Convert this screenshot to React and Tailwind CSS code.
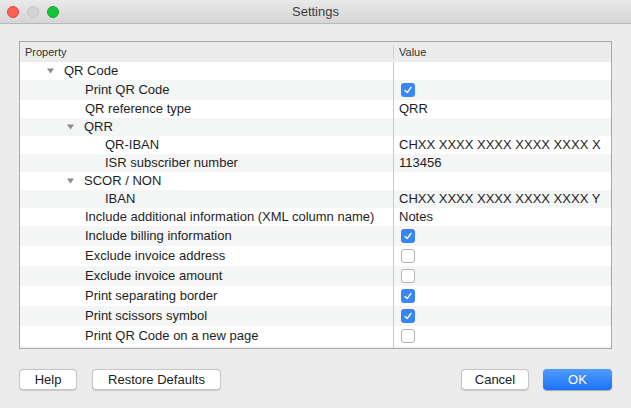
const rows = [
  { level: 0, label: "QR Code", toggle: true },
  { level: 1, label: "Print QR Code", check: true },
  { level: 1, label: "QR reference type", value: "QRR" },
  { level: 1, label: "QRR", toggle: true },
  { level: 2, label: "QR-IBAN", value: "CHXX XXXX XXXX XXXX XXXX X" },
  { level: 2, label: "ISR subscriber number", value: "113456" },
  { level: 1, label: "SCOR / NON", toggle: true },
  { level: 2, label: "IBAN", value: "CHXX XXXX XXXX XXXX XXXX Y" },
  { level: 1, label: "Include additional information (XML column name)", value: "Notes" },
  { level: 1, label: "Include billing information", check: true },
  { level: 1, label: "Exclude invoice address", check: false },
  { level: 1, label: "Exclude invoice amount", check: false },
  { level: 1, label: "Print separating border", check: true },
  { level: 1, label: "Print scissors symbol", check: true },
  { level: 1, label: "Print QR Code on a new page", check: false },
];

const indents = ["pl-[44px]", "pl-[65px]", "pl-[85px]"];
const toggleIndents = ["pl-[27px]", "pl-[47px]", "pl-[67px]"];

const Triangle = () => (
  <svg width="7" height="6" viewBox="0 0 7 6" className="mr-[10px] shrink-0">
    <path d="M0 0.5 L7 0.5 L3.5 5.5 Z" fill="#8c8c8c" />
  </svg>
);

const Checkbox = ({ checked }) =>
  checked ? (
    <span className="flex h-[14px] w-[14px] items-center justify-center rounded-[3px] bg-[#3b86f7]">
      <svg width="10" height="10" viewBox="0 0 10 10">
        <path d="M2 5.4 L4.2 7.6 L8 2.4" fill="none" stroke="white" strokeWidth="1.4" strokeLinecap="round" strokeLinejoin="round" />
      </svg>
    </span>
  ) : (
    <span className="block h-[14px] w-[14px] rounded-[3px] border border-[#b4b4b4] bg-white" />
  );

const Button = ({ children, primary, className = "" }) => (
  <button
    className={
      primary
        ? `h-[21px] rounded-[4px] bg-gradient-to-b from-[#4f9bfd] to-[#1b71fa] text-[13px] text-white shadow-[0_0.5px_1px_rgba(0,0,0,0.3)] ${className}`
        : `h-[21px] rounded-[4px] border border-[#c6c6c6] bg-white text-[13px] text-[#222] shadow-[0_0.5px_1px_rgba(0,0,0,0.15)] ${className}`
    }
  >
    {children}
  </button>
);

export default function App() {
  return (
    <div className="h-[408px] w-[631px] overflow-hidden bg-[#ececec] font-['Liberation_Sans',Arial,sans-serif] text-[#1e1e1e]">
      {/* Title bar */}
      <div className="relative flex h-[24px] items-center border-b border-[#b8b8b8] bg-gradient-to-b from-[#e9e9e9] to-[#d5d5d5]">
        <div className="flex gap-[8px] pl-[7px]">
          <span className="h-[12px] w-[12px] rounded-full border border-[#e0443e] bg-[#fe5f57]" />
          <span className="h-[12px] w-[12px] rounded-full border border-[#c6c6c6] bg-[#d3d3d3]" />
          <span className="h-[12px] w-[12px] rounded-full border border-[#13a52a] bg-[#17c33c]" />
        </div>
        <div className="absolute inset-0 flex items-center justify-center text-[13px] text-[#3d3d3d]">Settings</div>
      </div>

      {/* Property table */}
      <div className="mx-[19px] mt-[17px] border border-[#a8a8a8] bg-white">
        <div className="flex h-[20px] bg-[#ececec] text-[11px] text-[#333]">
          <div className="flex w-[373px] items-center pl-[5px]">Property</div>
          <div className="my-[3px] w-px bg-[#cfcfcf]" />
          <div className="flex items-center pl-[5px]">Value</div>
        </div>
        {rows.map((r, i) => (
          <div
            key={r.label}
            className={`flex text-[13px] ${r.check !== undefined ? "h-[20px]" : "h-[18px]"} ${i % 2 ? "bg-[#f4f5f5]" : "bg-white"}`}
          >
            <div className={`flex w-[373px] items-center ${r.toggle ? toggleIndents[r.level] : indents[r.level]}`}>
              {r.toggle && <Triangle />}
              <span className="whitespace-nowrap">{r.label}</span>
            </div>
            <div className="w-px bg-[#c9c9c9]" />
            <div className="flex flex-1 items-center pl-[5px]">
              {r.check !== undefined ? (
                <span className="pl-[2px]">
                  <Checkbox checked={r.check} />
                </span>
              ) : (
                <span className="whitespace-nowrap">{r.value}</span>
              )}
            </div>
          </div>
        ))}
        <div className="flex h-[2px] bg-[#f4f5f5]">
          <div className="w-[373px]" />
          <div className="w-px bg-[#c9c9c9]" />
        </div>
      </div>

      {/* Buttons */}
      <div className="mt-[20px] flex px-[19px]">
        <Button className="w-[58px]">Help</Button>
        <Button className="ml-[15px] w-[129px]">Restore Defaults</Button>
        <div className="flex-1" />
        <Button className="w-[68px]">Cancel</Button>
        <Button primary className="ml-[14px] w-[69px]">OK</Button>
      </div>
    </div>
  );
}
